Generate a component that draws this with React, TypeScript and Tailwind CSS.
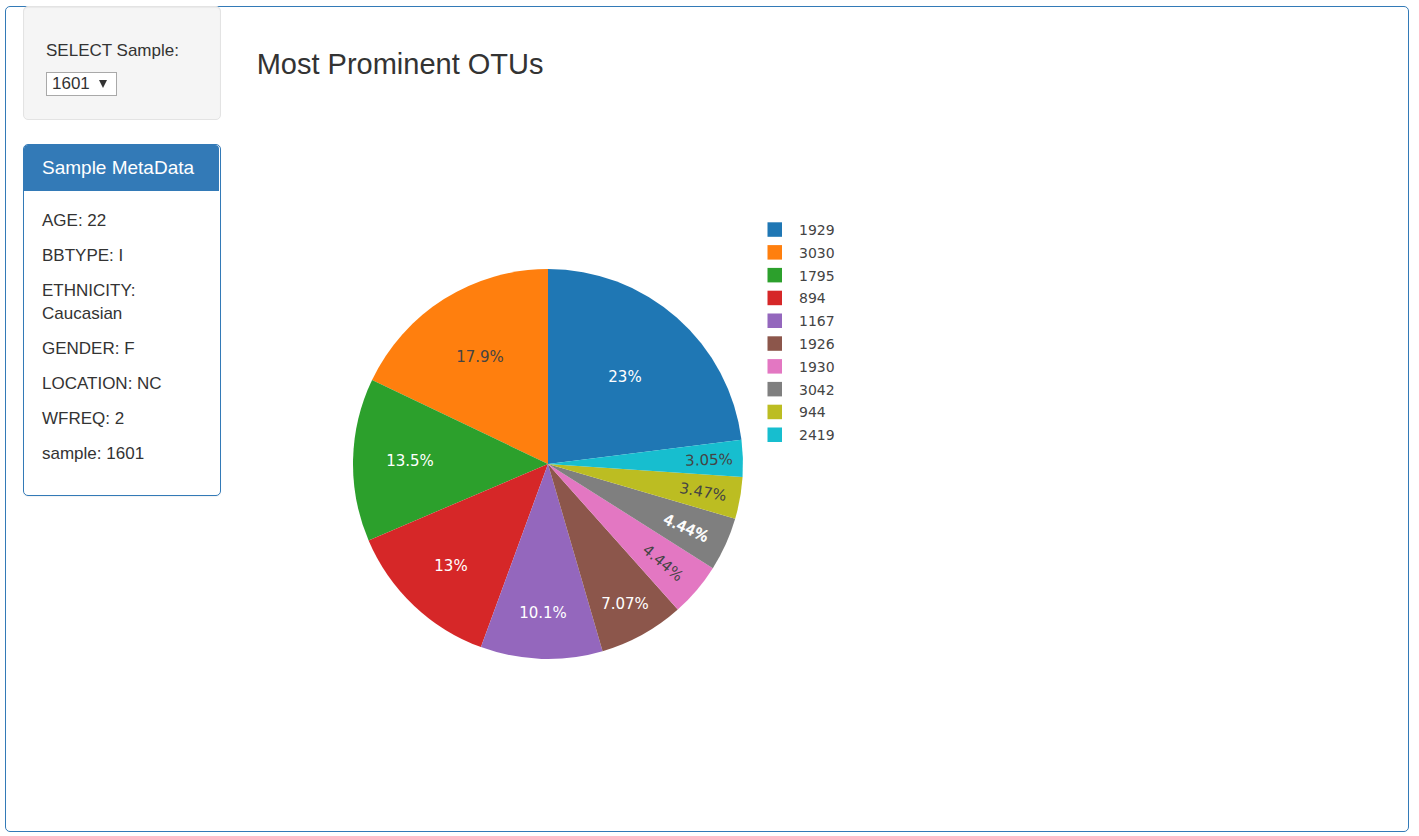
import React, { useState } from 'react';

type Slice = {
  id: string;
  value: number;
  label: string;
  color: string;
  text: string;
  x: number;
  y: number;
  rotate: number;
  strong?: boolean;
};

const CX = 308;
const CY = 364;
const RADIUS = 195;

const slices: Slice[] = [
  { id: '1929', value: 23, label: '23%', color: '#1f77b4', text: '#ffffff', x: 385, y: 277, rotate: 0 },
  { id: '3030', value: 17.9, label: '17.9%', color: '#ff7f0e', text: '#444444', x: 240, y: 257, rotate: 0 },
  { id: '1795', value: 13.5, label: '13.5%', color: '#2ca02c', text: '#ffffff', x: 170, y: 361, rotate: 0 },
  { id: '894', value: 13, label: '13%', color: '#d62728', text: '#ffffff', x: 211, y: 466, rotate: 0 },
  { id: '1167', value: 10.1, label: '10.1%', color: '#9467bd', text: '#ffffff', x: 303, y: 513, rotate: 0 },
  { id: '1926', value: 7.07, label: '7.07%', color: '#8c564b', text: '#ffffff', x: 385, y: 504, rotate: 0 },
  { id: '1930', value: 4.44, label: '4.44%', color: '#e377c2', text: '#444444', x: 423, y: 463, rotate: 40 },
  { id: '3042', value: 4.44, label: '4.44%', color: '#7f7f7f', text: '#ffffff', x: 446, y: 428, rotate: 24, strong: true },
  { id: '944', value: 3.47, label: '3.47%', color: '#bcbd22', text: '#444444', x: 463, y: 392, rotate: 10 },
  { id: '2419', value: 3.05, label: '3.05%', color: '#17becf', text: '#444444', x: 469, y: 360, rotate: -2 },
];

const metadata: [string, string][] = [
  ['AGE', '22'],
  ['BBTYPE', 'I'],
  ['ETHNICITY', 'Caucasian'],
  ['GENDER', 'F'],
  ['LOCATION', 'NC'],
  ['WFREQ', '2'],
  ['sample', '1601'],
];

function point(angle: number) {
  return `${(CX + RADIUS * Math.sin(angle)).toFixed(2)} ${(CY - RADIUS * Math.cos(angle)).toFixed(2)}`;
}

// The largest slice runs clockwise from twelve o'clock; the others follow counterclockwise.
function slicePaths() {
  const total = slices.reduce((sum, s) => sum + s.value, 0);
  let end = (slices[0].value / total) * 2 * Math.PI;
  return slices.map((s) => {
    const start = end - (s.value / total) * 2 * Math.PI;
    const d = `M${CX} ${CY}L${point(start)}A${RADIUS} ${RADIUS} 0 0 1 ${point(end)}Z`;
    end = start;
    return d;
  });
}

function PieChart() {
  const paths = slicePaths();
  return (
    <svg
      viewBox="0 0 720 731"
      width="720"
      height="731"
      className="block max-w-full font-['DejaVu_Sans',sans-serif] text-[15px]"
      role="img"
      aria-label="Most prominent OTUs"
    >
      {slices.map((s, i) => (
        <path key={s.id} d={paths[i]} fill={s.color} />
      ))}
      {slices.map((s) => (
        <text
          key={s.id}
          x={s.x}
          y={s.y + 5}
          textAnchor="middle"
          fill={s.text}
          stroke={s.strong ? s.text : 'none'}
          strokeWidth={s.strong ? 0.6 : 0}
          transform={`rotate(${s.rotate} ${s.x} ${s.y})`}
        >
          {s.label}
        </text>
      ))}
      {slices.map((s, i) => {
        const y = 130 + i * 22.8;
        return (
          <g key={s.id}>
            <rect x="527.5" y={y - 7.7} width="14.5" height="14.5" fill={s.color} />
            <text x="559" y={Math.round(y) + 5} fill="#444444" className="text-sm">
              {s.id}
            </text>
          </g>
        );
      })}
    </svg>
  );
}

export default function App() {
  const [sample, setSample] = useState('1601');
  return (
    <div className="mt-1.5 mr-2.5 mb-1 ml-[5px] flex rounded-[5px] border border-[#337ab7] bg-white font-['Liberation_Sans',Arial,sans-serif] text-[17px] leading-[23px] text-[#333333]">
      <aside className="w-1/6 shrink-0 pr-[19px] pl-[17px]">
        <div className="-mt-px mb-6 rounded-[5px] border border-[#e3e3e3] bg-[#f5f5f5] px-[22px] pt-8 pb-[23px] shadow-[inset_0_1px_1px_rgba(0,0,0,0.05)]">
          <label htmlFor="sample" className="mb-2.5 block">
            SELECT Sample:
          </label>
          <div className="relative w-[71px]">
            <select
              id="sample"
              value={sample}
              onChange={(e) => setSample(e.target.value)}
              className="block h-6 w-full appearance-none border border-[#a9a9a9] bg-white pl-[5px] text-[17px] leading-5"
            >
              <option>1601</option>
            </select>
            <svg viewBox="0 0 8 8" className="pointer-events-none absolute top-2 right-[10px] size-2" aria-hidden="true">
              <path d="M0 0H8L4 8Z" fill="#333333" />
            </svg>
          </div>
        </div>
        <section className="rounded-[5px] border border-[#337ab7] shadow-[0_1px_1px_rgba(0,0,0,0.05)]">
          <h3 className="mr-px rounded-t-[4px] bg-[#337ab7] px-[18px] py-3 text-[19px] leading-[22px] text-white">
            Sample MetaData
          </h3>
          <div className="p-[18px]">
            {metadata.map(([key, value]) => (
              <p key={key} className="mb-3">
                {key}: {value}
              </p>
            ))}
          </div>
        </section>
      </aside>
      <main className="min-w-0 flex-1">
        <h2 className="px-[17px] pt-10 pb-[19px] text-[29px] leading-[34px]">Most Prominent OTUs</h2>
        <PieChart />
      </main>
    </div>
  );
}
